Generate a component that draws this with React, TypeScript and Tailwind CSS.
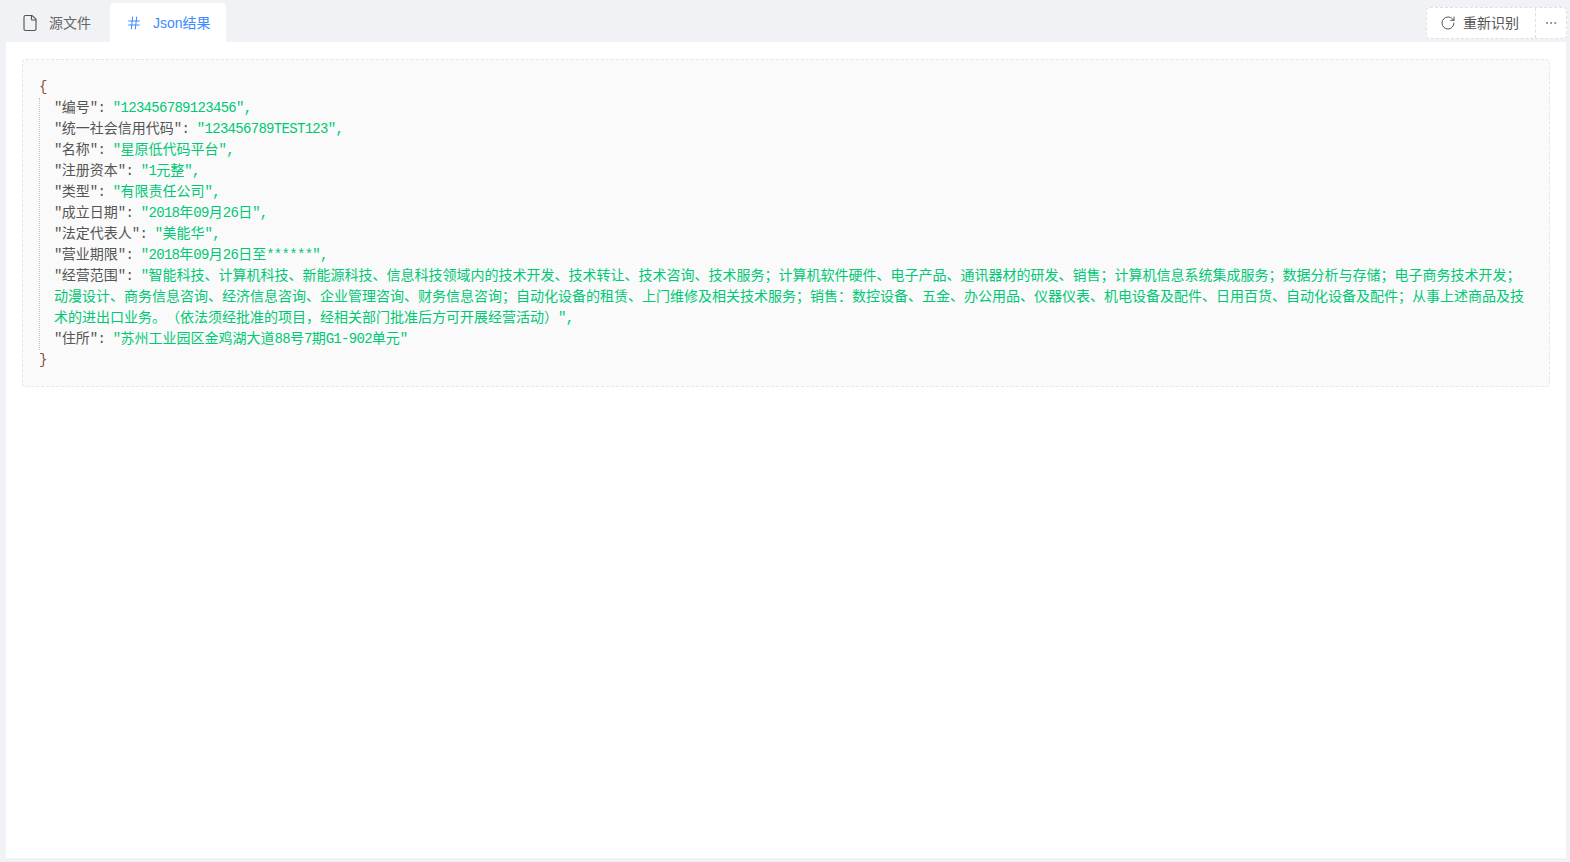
import { File, Hash, RotateCw, MoreHorizontal } from "lucide-react";

const FIELDS: [string, string][] = [
    ["编号", "123456789123456"],
    ["统一社会信用代码", "123456789TEST123"],
    ["名称", "星原低代码平台"],
    ["注册资本", "1元整"],
    ["类型", "有限责任公司"],
    ["成立日期", "2018年09月26日"],
    ["法定代表人", "美能华"],
    ["营业期限", "2018年09月26日至******"],
    [
        "经营范围",
        "智能科技、计算机科技、新能源科技、信息科技领域内的技术开发、技术转让、技术咨询、技术服务；计算机软件硬件、电子产品、通讯器材的研发、销售；计算机信息系统集成服务；数据分析与存储；电子商务技术开发；动漫设计、商务信息咨询、经济信息咨询、企业管理咨询、财务信息咨询；自动化设备的租赁、上门维修及相关技术服务；销售：数控设备、五金、办公用品、仪器仪表、机电设备及配件、日用百货、自动化设备及配件；从事上述商品及技术的进出口业务。（依法须经批准的项目，经相关部门批准后方可开展经营活动）",
    ],
    ["住所", "苏州工业园区金鸡湖大道88号7期G1-902单元"],
];

// latin runs get narrowed to the 7.7px advance of the original mono font
function Mono({ text }: { text: string }) {
    const runs = text.match(/[\x20-\x7e]+|[^\x20-\x7e]+/g) ?? [];
    return (
        <>
            {runs.map((run, i) =>
                /^[\x20-\x7e]/.test(run) ? (
                    <span key={i} className="tracking-[-0.7px] whitespace-pre">
                        {run}
                    </span>
                ) : (
                    <span key={i}>{run}</span>
                ),
            )}
        </>
    );
}

export default function App() {
    return (
        <div className="h-[862px] w-full overflow-hidden bg-[#f0f2f5] font-['Liberation_Sans','Noto_Sans_CJK_SC',sans-serif] text-sm text-[#555]">
            <div className="flex h-[42px] items-end justify-between pl-1.5 pr-1.5">
                <div className="flex h-[39px]">
                    <div className="flex w-[104px] items-center gap-2.5 pl-[15px] text-[#666]">
                        <File size={18} strokeWidth={1.5} className="text-[#555]" />
                        <span>源文件</span>
                    </div>
                    <div className="flex w-[116px] items-center gap-[11px] rounded-t bg-white pl-4 text-[#3b8cff]">
                        <Hash size={16} strokeWidth={1.5} />
                        <span>Json结果</span>
                    </div>
                </div>
                <div className="mb-[3px] mr-[-3px] flex h-8 rounded border border-dashed border-[#dcdfe6] bg-white">
                    <div className="flex w-[109px] items-center gap-[7px] border-r border-dashed border-[#dcdfe6] pl-[13px] text-[#555]">
                        <RotateCw size={16} strokeWidth={1.5} />
                        <span>重新识别</span>
                    </div>
                    <div className="flex w-[30px] items-center justify-center text-[#777]">
                        <MoreHorizontal size={14} strokeWidth={1.5} />
                    </div>
                </div>
            </div>
            <div className="ml-1.5 mr-1 h-[816px] bg-white px-4 pt-[17px]">
                <div className="h-[328px] rounded border border-dashed border-[#e4e7ed] bg-[#fafafa] pl-4 pr-4 pt-[17px] font-['Liberation_Mono','Noto_Sans_CJK_SC',monospace] text-sm leading-[21px] [text-spacing-trim:space-all]">
                    <div className="text-[#8f4b3a]">{"{"}</div>
                    <div className="border-l border-dotted border-[#b8c0d4] pl-[14px]">
                        {FIELDS.map(([key, value], i) => (
                            <div key={key}>
                                <span className="text-[#555]">
                                    <Mono text={`"${key}"`} />
                                    <span className="tracking-[-0.7px] whitespace-pre">: </span>
                                </span>
                                <span className="text-[#00c875]">
                                    <Mono text={`"${value}"`} />
                                    {i < FIELDS.length - 1 && (
                                        <span className="tracking-[-0.7px]">,</span>
                                    )}
                                </span>
                            </div>
                        ))}
                    </div>
                    <div className="text-[#8f4b3a]">{"}"}</div>
                </div>
            </div>
        </div>
    );
}
